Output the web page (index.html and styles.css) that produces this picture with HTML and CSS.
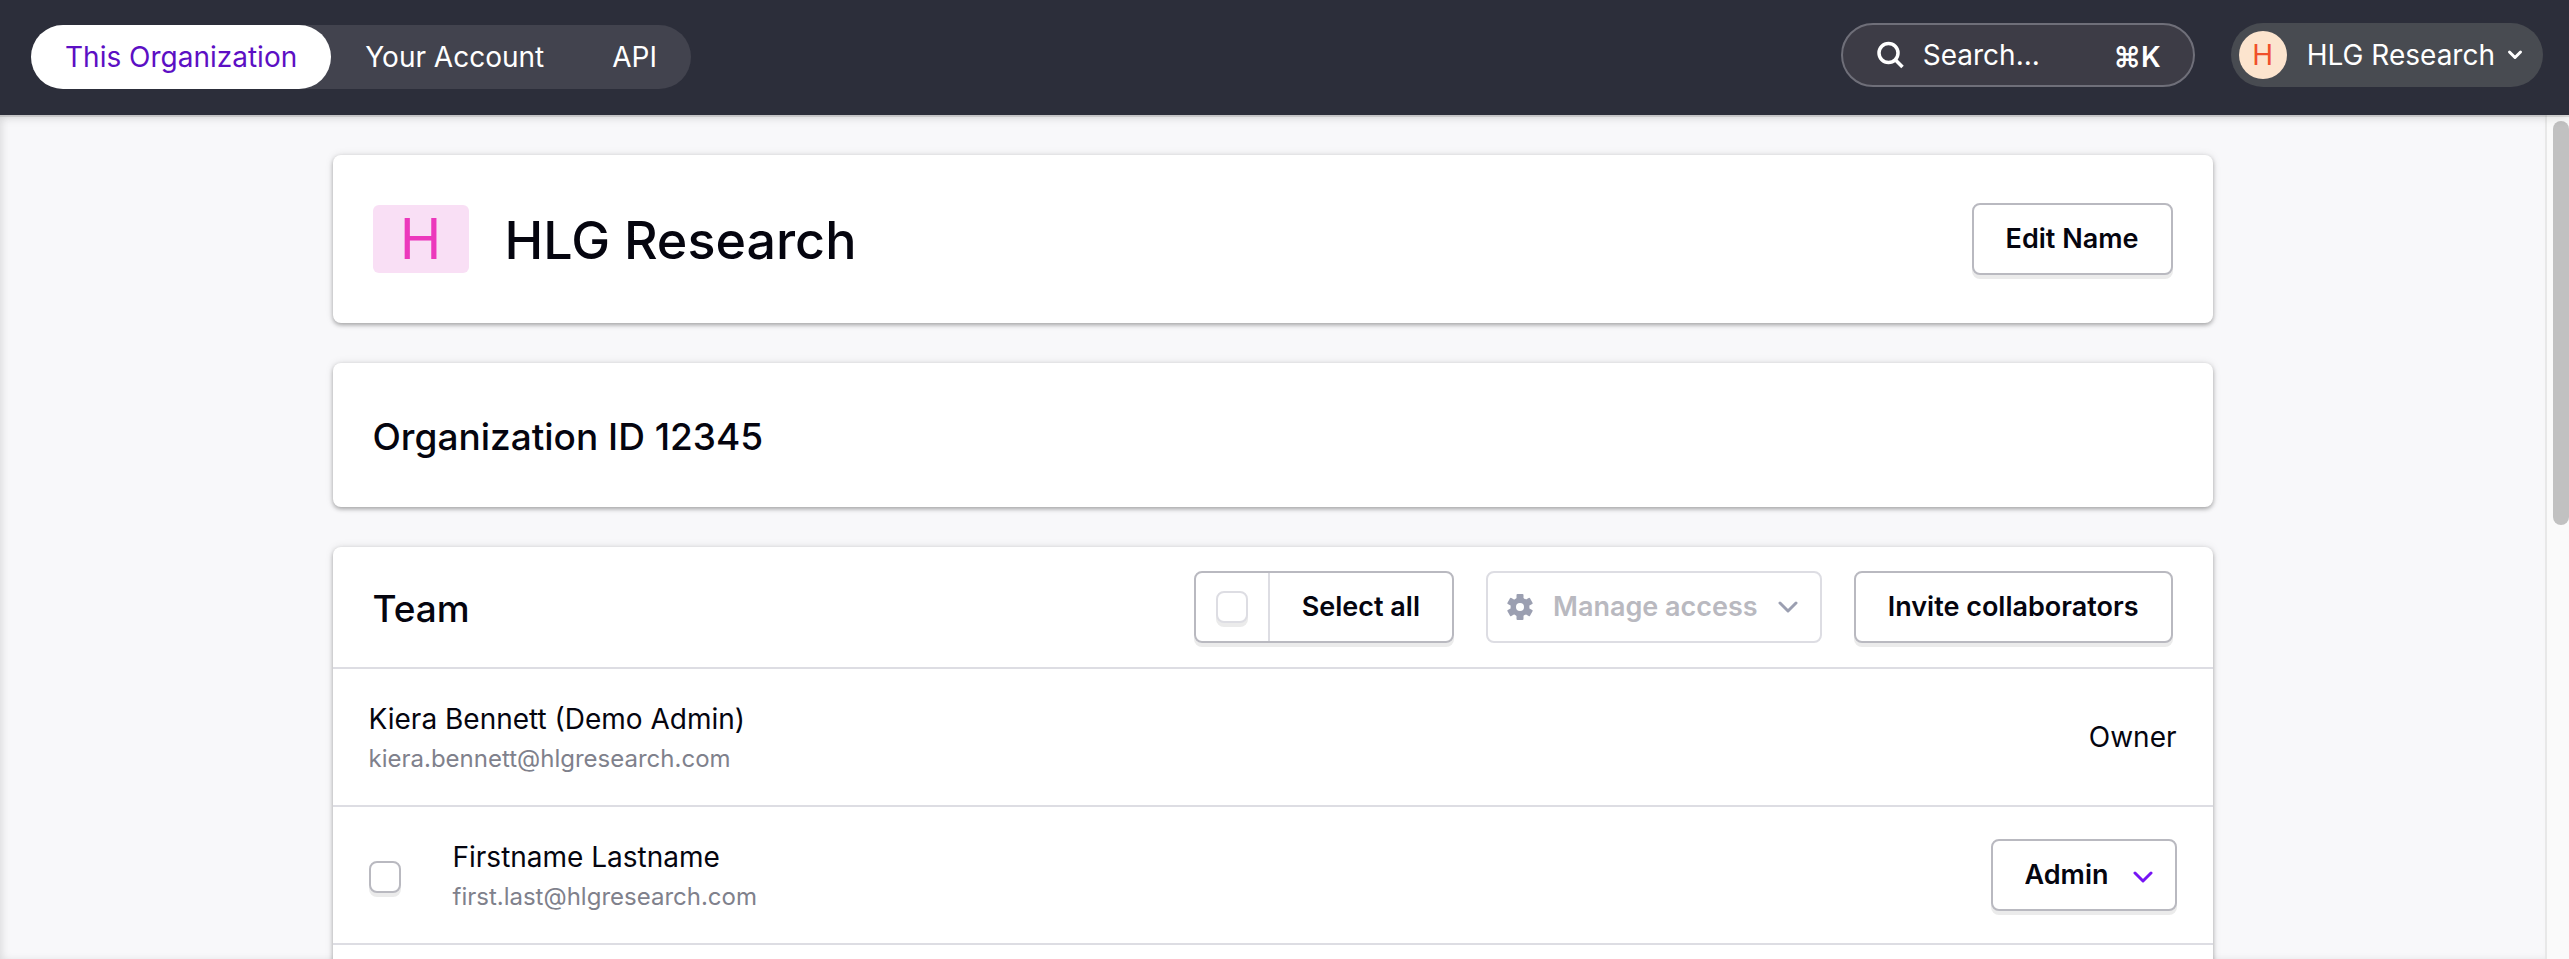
FILE: index.html
```html
<!DOCTYPE html>
<html lang="en">
<head>
    <meta charset="UTF-8">
    <meta name="viewport" content="width=device-width, initial-scale=1.0">
    <title>HLG Research - Organization</title>
    <link rel="stylesheet" href="styles.css">
</head>
<body>
<header class="topbar">
    <nav class="tabs">
        <a class="tab active" href="#">This Organization</a>
        <a class="tab" href="#">Your Account</a>
        <a class="tab" href="#">API</a>
    </nav>
    <div class="topbar-right">
        <label class="search">
            <svg width="28" height="28" viewBox="0 0 28 28" fill="none" stroke="#fff" stroke-width="3.500"><circle cx="11.500" cy="12" r="9.500"/><path d="M18 18.500l7.500 7.500"/></svg>
            <input type="text" placeholder="Search..." aria-label="Search">
            <kbd>⌘K</kbd>
        </label>
        <button type="button" class="account">
            <span class="account-avatar">H</span>
            <span>HLG Research</span>
            <svg width="16" height="12" viewBox="0 0 16 12" fill="none" stroke="#fff" stroke-width="3" stroke-linecap="round" stroke-linejoin="round"><path d="M2.500 3l5.500 5.500L13.500 3"/></svg>
        </button>
    </div>
</header>

<div class="page">
    <main class="content">
        <section class="card org">
            <span class="org-avatar">H</span>
            <h1>HLG Research</h1>
            <button type="button" class="btn">Edit Name</button>
        </section>

        <section class="card org-id">
            <h2>Organization ID 12345</h2>
        </section>

        <section class="card team">
            <div class="team-header">
                <h2>Team</h2>
                <div class="actions">
                    <div class="select-all">
                        <span class="select-all-check"><input type="checkbox" class="check light" id="selectAll"></span>
                        <label for="selectAll">Select all</label>
                    </div>
                    <button type="button" class="btn manage" disabled>
                        <svg width="26" height="26" viewBox="0 0 26 26" fill="#9b9fb1">
                            <circle cx="13" cy="13" r="9.500"/>
                            <rect x="9.500" y="0" width="7" height="26" rx="1"/>
                            <rect x="9.500" y="0" width="7" height="26" rx="1" transform="rotate(60 13 13)"/>
                            <rect x="9.500" y="0" width="7" height="26" rx="1" transform="rotate(120 13 13)"/>
                            <circle cx="13" cy="13" r="4" fill="#fff"/>
                        </svg>
                        <span>Manage access</span>
                        <svg width="20" height="12" viewBox="0 0 20 12" fill="none" stroke="#9b9fb1" stroke-width="3" stroke-linecap="round" stroke-linejoin="round"><path d="M2 2l8 8 8-8"/></svg>
                    </button>
                    <button type="button" class="btn">Invite collaborators</button>
                </div>
            </div>
            <ul class="members">
                <li class="member">
                    <div class="member-info">
                        <div class="member-name">Kiera Bennett (Demo Admin)</div>
                        <div class="member-email">kiera.bennett@hlgresearch.com</div>
                    </div>
                    <span class="member-role">Owner</span>
                </li>
                <li class="member">
                    <input type="checkbox" class="check" id="member2">
                    <label class="member-info" for="member2">
                        <span class="member-name">Firstname Lastname</span>
                        <span class="member-email">first.last@hlgresearch.com</span>
                    </label>
                    <div class="role">
                        <select class="btn" aria-label="Role">
                            <option>Admin</option>
                        </select>
                        <svg width="20" height="12" viewBox="0 0 20 12" fill="none" stroke="#7614f5" stroke-width="3" stroke-linecap="round" stroke-linejoin="round"><path d="M2 2l8 8 8-8"/></svg>
                    </div>
                </li>
            </ul>
        </section>
    </main>
    <div class="scrollbar"><div class="thumb"></div></div>
</div>
</body>
</html>
```
FILE: styles.css
```css
* {
    box-sizing: border-box;
}

body {
    display: flex;
    flex-direction: column;
    height: 100vh;
    margin: 0;
    overflow: hidden;
    font-family: Inter, "Liberation Sans", sans-serif;
    font-size: 28px;
    line-height: 40px;
    color: #05050f;
    background: #f8f8fa;
}

h1, h2 {
    margin: 0;
    font-weight: 500;
}

h1 {
    font-size: 52px;
    line-height: 64px;
}

h2 {
    font-size: 37px;
    line-height: 48px;
}

button, input, select, kbd {
    font: inherit;
    color: inherit;
}

svg {
    flex-shrink: 0;
}

/* top bar */
.topbar {
    position: relative;
    z-index: 1;
    display: flex;
    flex-shrink: 0;
    justify-content: space-between;
    height: 115px;
    padding: 23px 26px 0 31px;
    background: #2c2e3a;
    box-shadow: 0 2px 0 rgba(0, 0, 0, 0.1), 0 2px 10px rgba(0, 0, 0, 0.14);
    color: #fff;
}

.tabs {
    display: flex;
    height: 64px;
    margin-top: 2px;
    border-radius: 32px;
    background: #42434e;
}

.tab {
    padding: 12px 34px;
    border-radius: 32px;
    color: #fff;
    text-decoration: none;
}

.tab.active {
    background: #fff;
    color: #5c0fc4;
}

.topbar-right {
    display: flex;
    gap: 36px;
}

.search {
    display: flex;
    align-items: center;
    width: 354px;
    height: 64px;
    padding: 0 32px 0 34px;
    border: 2px solid #6f6f79;
    border-radius: 32px;
    background: #3d3c46;
}

.search input {
    flex: 1;
    min-width: 0;
    margin-left: 18px;
    padding: 0;
    border: none;
    outline: none;
    background: none;
}

.search input::placeholder {
    color: #fff;
    opacity: 1;
}

.search kbd {
    padding-top: 4px;
    font-weight: 600;
}

.account {
    display: flex;
    align-items: center;
    height: 64px;
    padding: 0 20px 0 8px;
    border: none;
    border-radius: 32px;
    background: #484b51;
}

.account-avatar {
    width: 48px;
    margin-right: 20px;
    border-radius: 50%;
    background: #fce4ce;
    color: #f0502b;
    line-height: 48px;
    text-align: center;
}

.account svg {
    margin-left: 12px;
}

/* page */
.page {
    display: flex;
    flex: 1;
    min-height: 0;
}

.content {
    flex: 1;
    padding: 40px 24px;
    overflow: hidden;
    box-shadow: inset 4px 0 8px -2px rgba(0, 0, 0, 0.12);
}

.scrollbar {
    width: 24px;
    padding: 6px 0 0 6px;
    border-left: 2px solid #e8e8e8;
    background: #fafafa;
}

.thumb {
    height: 48.2%;
    border-radius: 8px;
    background: #c1c1c1;
}

.card {
    max-width: 1880px;
    margin: 0 auto 40px;
    border-radius: 8px;
    background: #fff;
    box-shadow: 0 2px 4px rgba(0, 0, 0, 0.3), 0 0 8px rgba(0, 0, 0, 0.1);
}

.org {
    display: flex;
    align-items: center;
    padding: 48px 40px;
}

.org h1 {
    flex: 1;
    margin-left: 36px;
    padding-top: 4px;
}

.org-avatar {
    width: 96px;
    border-radius: 6px;
    background: #f9dff5;
    color: #ec38bc;
    font-size: 56px;
    line-height: 68px;
    text-align: center;
}

.org-id {
    padding: 50px 40px 46px;
}

/* buttons */
.btn {
    height: 72px;
    padding: 0 32px;
    border: 2px solid #b9b9c0;
    border-radius: 8px;
    background: #fff;
    box-shadow: 0 4px 0 #ebebeb;
    font-size: 27px;
    font-weight: 600;
}

.manage {
    display: flex;
    align-items: center;
    gap: 20px;
    padding: 0 22px 0 19px;
    border-color: #dddde3;
    box-shadow: none;
    color: #b9b9c0;
}

/* team */
.team-header {
    display: flex;
    align-items: center;
    justify-content: space-between;
    padding: 24px 40px;
}

.team-header h2 {
    padding-top: 4px;
}

.actions {
    display: flex;
    gap: 32px;
}

.select-all {
    display: flex;
    height: 72px;
    border: 2px solid #b9b9c0;
    border-radius: 8px;
    box-shadow: 0 4px 0 #ebebeb;
    font-size: 27px;
    font-weight: 600;
}

.select-all-check {
    padding: 18px 20px;
    border-right: 2px solid #dddde3;
}

.select-all label {
    padding: 14px 32px;
}

.check {
    display: block;
    appearance: none;
    width: 32px;
    height: 32px;
    margin: 0;
    border: 2px solid #b9b9c0;
    border-radius: 8px;
    background: #fff;
    box-shadow: 0 4px 0 #ebebeb;
}

.check.light {
    border-color: #dddde3;
}

.members {
    margin: 0;
    padding: 0 0 64px;
    list-style: none;
}

.member {
    display: flex;
    align-items: center;
    min-height: 138px;
    padding: 0 36px;
    border-top: 2px solid #dddde3;
}

.member:last-child {
    min-height: 140px;
    border-bottom: 2px solid #dddde3;
}

.member .check {
    margin: 4px 52px 0 0;
}

.member-info {
    flex: 1;
    padding-top: 4px;
}

.member-name, .member-email {
    display: block;
}

.member-email {
    font-size: 24px;
    color: #7f818c;
}

.role {
    position: relative;
}

.role select {
    appearance: none;
    padding-right: 66px;
}

.role svg {
    position: absolute;
    right: 24px;
    top: 32px;
    pointer-events: none;
}
```
